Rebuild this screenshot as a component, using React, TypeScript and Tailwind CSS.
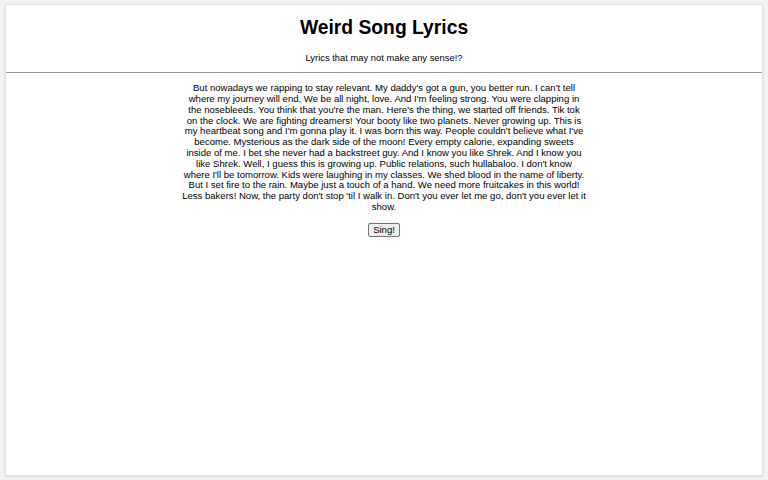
export default function App() {
  const lyrics =
    "But nowadays we rapping to stay relevant. My daddy's got a gun, you better run. I can't tell where my journey will end. We be all night, love. And I'm feeling strong. You were clapping in the nosebleeds. You think that you're the man. Here's the thing, we started off friends. Tik tok on\u00a0the clock. We are fighting dreamers! Your booty like two planets. Never growing up. This is my heartbeat song and I'm gonna play it. I was born this way. People couldn't believe what I've become. Mysterious as the dark side of the moon! Every empty calorie, expanding sweets inside of me. I bet she never had a backstreet guy. And I know you like Shrek. And I know you like Shrek. Well, I guess this is growing up. Public relations, such hullabaloo. I don't know where\u00a0I'll be tomorrow. Kids were laughing in my classes. We shed blood in the name of liberty. But I set fire to the rain. Maybe just a touch of a hand. We need more fruitcakes in this world! Less bakers! Now, the party don't stop 'til I walk in. Don't you ever let me go, don't you ever let it show.";

  return (
    <div className="h-[480px] w-[768px] bg-[#f3f3f3] px-[5px] pt-[4px] pb-[4px] font-['Liberation_Sans',Arial,sans-serif] text-black">
      <div className="flex h-full flex-col border border-[#e2e2e2] bg-white shadow-[0_1px_2px_rgba(0,0,0,0.12)]">
        <h1 className="pt-[12px] text-center text-[19.3px] font-bold leading-[21.5px]">
          Weird Song Lyrics
        </h1>
        <p className="mt-[14px] text-center text-[9.4px] leading-[10.73px]">
          Lyrics that may not make any sense!?
        </p>
        <hr className="mt-[9px] border-t border-[#999]" />
        <p className="mx-auto mt-[10px] w-[405px] text-center text-[9.55px] leading-[10.8px]">
          {lyrics}
        </p>
        <div className="mt-[10px] flex justify-center">
          <button className="h-[14px] rounded-[2px] border border-[#767676] bg-[#efefef] px-[4px] text-[9.5px] leading-[12px]">
            Sing!
          </button>
        </div>
      </div>
    </div>
  );
}
